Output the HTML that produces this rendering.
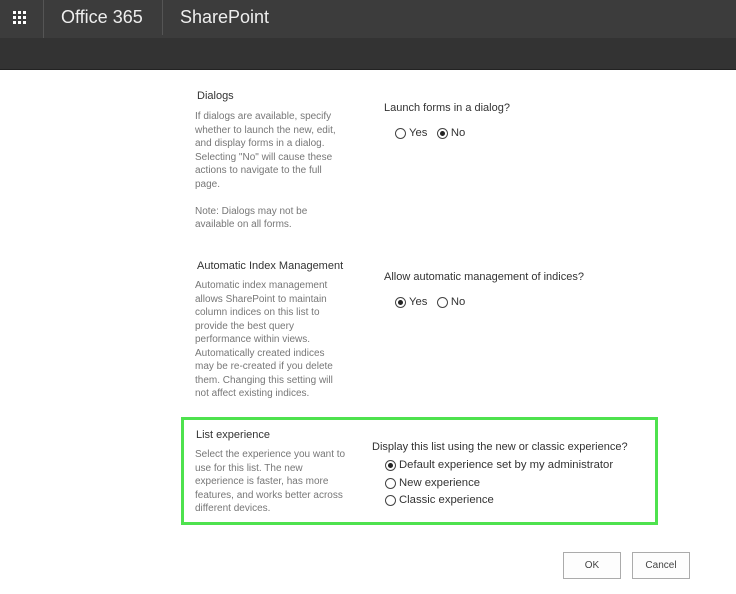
<!DOCTYPE html>
<html><head><style>
body{margin:0;width:736px;height:594px;background:#fff;font-family:"Liberation Sans",sans-serif;position:relative;overflow:hidden}
.a{position:absolute;white-space:nowrap}
.t{font-size:11px;color:#333}
.d{font-size:10px;color:#777;line-height:13.5px}
.q{font-size:11px;color:#333}
.r{font-size:11.3px;color:#333;display:flex;align-items:center}
.rb{width:9px;height:9px;border:1px solid #444;border-radius:50%;display:inline-block;margin-right:3px;position:relative}
.rb.on::after{content:"";position:absolute;left:2px;top:2px;width:5px;height:5px;border-radius:50%;background:#222}
.btn{position:absolute;border:1px solid #ababab;background:#fdfdfd;font-size:10px;color:#444;text-align:center}
</style></head><body>
<div class="a" style="left:0;top:0;width:736px;height:38px;background:#3c3c3c"></div>
<div class="a" style="left:0;top:38px;width:736px;height:31px;background:#333"></div>
<div class="a" style="left:0;top:69px;width:736px;height:1px;background:#222"></div>
<div class="a" style="left:43px;top:0;width:1px;height:38px;background:#555"></div>
<div class="a" style="left:162px;top:0;width:1px;height:35px;background:#555"></div>
<svg class="a" style="left:13px;top:11px" width="16" height="16"><g fill="#fff"><rect x="0" y="0" width="3" height="3"/><rect x="5" y="0" width="3" height="3"/><rect x="10" y="0" width="3" height="3"/><rect x="0" y="5" width="3" height="3"/><rect x="5" y="5" width="3" height="3"/><rect x="10" y="5" width="3" height="3"/><rect x="0" y="10" width="3" height="3"/><rect x="5" y="10" width="3" height="3"/><rect x="10" y="10" width="3" height="3"/></g></svg>
<div class="a" style="left:61px;top:7px;font-size:18px;color:#eee">Office 365</div>
<div class="a" style="left:180px;top:7px;font-size:18px;color:#eee">SharePoint</div>

<div class="a t" style="left:197px;top:90px">Dialogs</div>
<div class="a d" style="left:195px;top:110px">If dialogs are available, specify<br>whether to launch the new, edit,<br>and display forms in a dialog.<br>Selecting "No" will cause these<br>actions to navigate to the full<br>page.<br><br>Note: Dialogs may not be<br>available on all forms.</div>
<div class="a q" style="left:384px;top:102px">Launch forms in a dialog?</div>
<div class="a r" style="left:395px;top:127px"><span class="rb"></span>Yes&nbsp;&nbsp;&nbsp;<span class="rb on"></span>No</div>

<div class="a t" style="left:197px;top:260px">Automatic Index Management</div>
<div class="a d" style="left:195px;top:279px">Automatic index management<br>allows SharePoint to maintain<br>column indices on this list to<br>provide the best query<br>performance within views.<br>Automatically created indices<br>may be re-created if you delete<br>them. Changing this setting will<br>not affect existing indices.</div>
<div class="a q" style="left:384px;top:271px">Allow automatic management of indices?</div>
<div class="a r" style="left:395px;top:296px"><span class="rb on"></span>Yes&nbsp;&nbsp;&nbsp;<span class="rb"></span>No</div>

<div class="a" style="left:181px;top:417px;width:471px;height:102px;border:3px solid #4ee24e"></div>
<div class="a t" style="left:196px;top:429px">List experience</div>
<div class="a d" style="left:195px;top:448px">Select the experience you want to<br>use for this list. The new<br>experience is faster, has more<br>features, and works better across<br>different devices.</div>
<div class="a q" style="left:372px;top:441px">Display this list using the new or classic experience?</div>
<div class="a r" style="left:385px;top:459px"><span class="rb on"></span>Default experience set by my administrator</div>
<div class="a r" style="left:385px;top:477px"><span class="rb"></span>New experience</div>
<div class="a r" style="left:385px;top:494px"><span class="rb"></span>Classic experience</div>

<div class="btn" style="left:563px;top:552px;width:56px;height:25px;line-height:25px">OK</div>
<div class="btn" style="left:632px;top:552px;width:56px;height:25px;line-height:25px">Cancel</div>
</body></html>
